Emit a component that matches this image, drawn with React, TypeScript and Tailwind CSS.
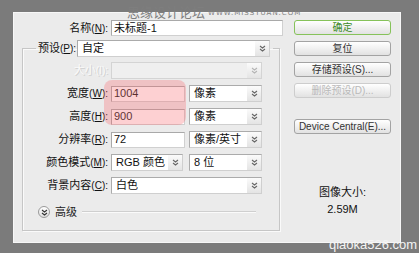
import React from "react";

function Chevrons({ color = "#555" }: { color?: string }) {
  return (
    <svg width="7" height="7" viewBox="0 0 7 7" fill="none" stroke={color} strokeWidth="1.1">
      <path d="M1 1l2.5 2 2.5-2" />
      <path d="M1 4l2.5 2 2.5-2" />
    </svg>
  );
}

function Key({ k }: { k: string }) {
  return (
    <span className="text-[10px]">
      (<span className="underline">{k}</span>):
    </span>
  );
}

function Field({ value, w }: { value: string; w: string }) {
  return (
    <div className={`${w} h-[16px] bg-white border border-[#a9a9a9] border-b-[#d0d0d0] border-r-[#d0d0d0] flex items-center pl-[2px] text-[11px] text-[#111]`}>
      {value}
    </div>
  );
}

function Select({ value, w, disabled }: { value: string; w: string; disabled?: boolean }) {
  return (
    <div
      className={`${w} shrink-0 h-[17px] flex items-center border ${
        disabled ? "bg-[#efefef] border-[#d4d4d4]" : "bg-white border-[#ababab] border-r-[#cfcfcf] border-b-[#cfcfcf]"
      }`}
    >
      <span className="flex-1 pl-[4px] text-[11px] text-[#111] leading-none">{value}</span>
      <span className="w-[14px] h-full flex items-center justify-center bg-gradient-to-b from-[#fbfbfb] to-[#e4e4e4]">
        <Chevrons color={disabled ? "#b5b5b5" : "#666"} />
      </span>
    </div>
  );
}

function Label({ children, disabled }: { children: React.ReactNode; disabled?: boolean }) {
  return (
    <div
      className={`w-[85px] text-right text-[11px] leading-none ${
        disabled ? "text-[#fafafa] [text-shadow:1px_1px_0_#cfcfcf]" : "text-[#111]"
      }`}
    >
      {children}
    </div>
  );
}

function Button({ children, primary, disabled }: { children: React.ReactNode; primary?: boolean; disabled?: boolean }) {
  return (
    <div
      className={`w-[97px] h-[15px] rounded-[3px] border flex items-center justify-center text-[10px] leading-none bg-gradient-to-b from-white to-[#e2e2e2] ${
        primary
          ? "border-[#86c25a] text-[#3c8a26]"
          : disabled
          ? "border-[#cdcdcd] text-[#b9b9b9]"
          : "border-[#a3a3a3] text-[#333]"
      }`}
    >
      {children}
    </div>
  );
}

export default function App() {
  return (
    <div className="relative w-[419px] h-[253px] overflow-hidden whitespace-nowrap bg-[#7b7b7b] pl-[13px] pt-[12px] font-['Liberation_Sans','Noto_Sans_CJK_SC',sans-serif]">
      <div className="w-[388px] h-[231px] bg-[#ebebeb] border border-[#f7f7f7] flex">
        {/* left side */}
        <div className="w-[270px] pl-[8px] pt-[7px] flex flex-col">
          <div className="flex items-center">
            <div className="w-[86px] text-right text-[11px] text-[#111] leading-none">
              名称<Key k="N" />
            </div>
            <div className="ml-[3px]">
              <Field value="未标题-1" w="w-[172px]" />
            </div>
          </div>

          <fieldset className="mt-[4px] w-[258px] h-[191px] border border-[#c6c6c6] shadow-[inset_1px_1px_0_#fafafa,1px_1px_0_#fafafa]">
            <legend className="ml-[13px] pl-[2px] pr-[3px] flex items-center">
              <span className="w-[39px] shrink-0 text-[11px] text-[#111] leading-none">
                预设<Key k="P" />
              </span>
              <Select value="自定" w="w-[193px]" />
            </legend>

            <div className="mt-[5px] flex flex-col gap-[6px]">
              <div className="flex items-center">
                <Label disabled>
                  大小<span className="text-[10px]">(I):</span>
                </Label>
                <div className="ml-[3px]">
                  <Select value="" w="w-[151px]" disabled />
                </div>
              </div>
              <div className="flex items-center">
                <Label>
                  宽度<Key k="W" />
                </Label>
                <div className="ml-[3px] flex items-center gap-[4px]">
                  <Field value="1004" w="w-[74px]" />
                  <Select value="像素" w="w-[73px]" />
                </div>
              </div>
              <div className="flex items-center">
                <Label>
                  高度<Key k="H" />
                </Label>
                <div className="ml-[3px] flex items-center gap-[4px]">
                  <Field value="900" w="w-[74px]" />
                  <Select value="像素" w="w-[73px]" />
                </div>
              </div>
              <div className="flex items-center">
                <Label>
                  分辨率<Key k="R" />
                </Label>
                <div className="ml-[3px] flex items-center gap-[4px]">
                  <Field value="72" w="w-[74px]" />
                  <Select value="像素/英寸" w="w-[73px]" />
                </div>
              </div>
              <div className="flex items-center">
                <Label>
                  颜色模式<Key k="M" />
                </Label>
                <div className="ml-[3px] flex items-center gap-[6px]">
                  <Select value="RGB 颜色" w="w-[72px]" />
                  <Select value="8 位" w="w-[73px]" />
                </div>
              </div>
              <div className="flex items-center">
                <Label>
                  背景内容<Key k="C" />
                </Label>
                <div className="ml-[3px]">
                  <Select value="白色" w="w-[151px]" />
                </div>
              </div>
            </div>

            <div className="mt-[12px] ml-[15px] mr-[23px] flex items-center">
              <span className="w-[12px] h-[12px] rounded-full border border-[#9a9a9a] bg-gradient-to-b from-white to-[#dedede] flex items-center justify-center">
                <Chevrons color="#333" />
              </span>
              <span className="ml-[5px] text-[11px] text-[#222] leading-none">高级</span>
              <span className="ml-[5px] flex-1 h-[2px] border-t border-[#cfcfcf] border-b border-b-[#fafafa]" />
            </div>
          </fieldset>
        </div>

        {/* right side */}
        <div className="ml-[10px] pt-[7px] flex flex-col">
          <div className="flex flex-col gap-[6px]">
            <Button primary>确定</Button>
            <Button>复位</Button>
            <Button>存储预设(S)...</Button>
            <Button disabled>删除预设(D)...</Button>
          </div>
          <div className="mt-[21px]">
            <Button>Device Central(E)...</Button>
          </div>
          <div className="mt-[51px] text-center text-[11px] text-[#111] leading-[14px]">图像大小:</div>
          <div className="mt-[3px] text-center text-[11px] text-[#111] leading-[14px]">2.59M</div>
        </div>
      </div>

      {/* highlight */}
      <div className="absolute left-[104px] top-[80px] w-[82px] h-[45px] rounded-[8px] bg-[rgba(250,110,115,0.32)] pointer-events-none" />

      {/* watermarks */}
      <div className="absolute left-[127px] top-[5px] flex items-end pointer-events-none">
        <span className="text-[13px] leading-none text-[#7e7e7e] font-['Noto_Sans_CJK_SC',sans-serif]">思缘设计论坛</span>
        <span className="ml-[3px] mb-[1px] text-[7px] leading-none tracking-[1px] text-[#808080] font-['DejaVu_Sans',sans-serif]">
          WWW.MISSYUAN.COM
        </span>
      </div>
      <div className="absolute left-[329px] top-[238px] text-[13px] leading-none text-[#f4f4f4] font-['Liberation_Sans',sans-serif] pointer-events-none">
        qiaoka526.com
      </div>
    </div>
  );
}
